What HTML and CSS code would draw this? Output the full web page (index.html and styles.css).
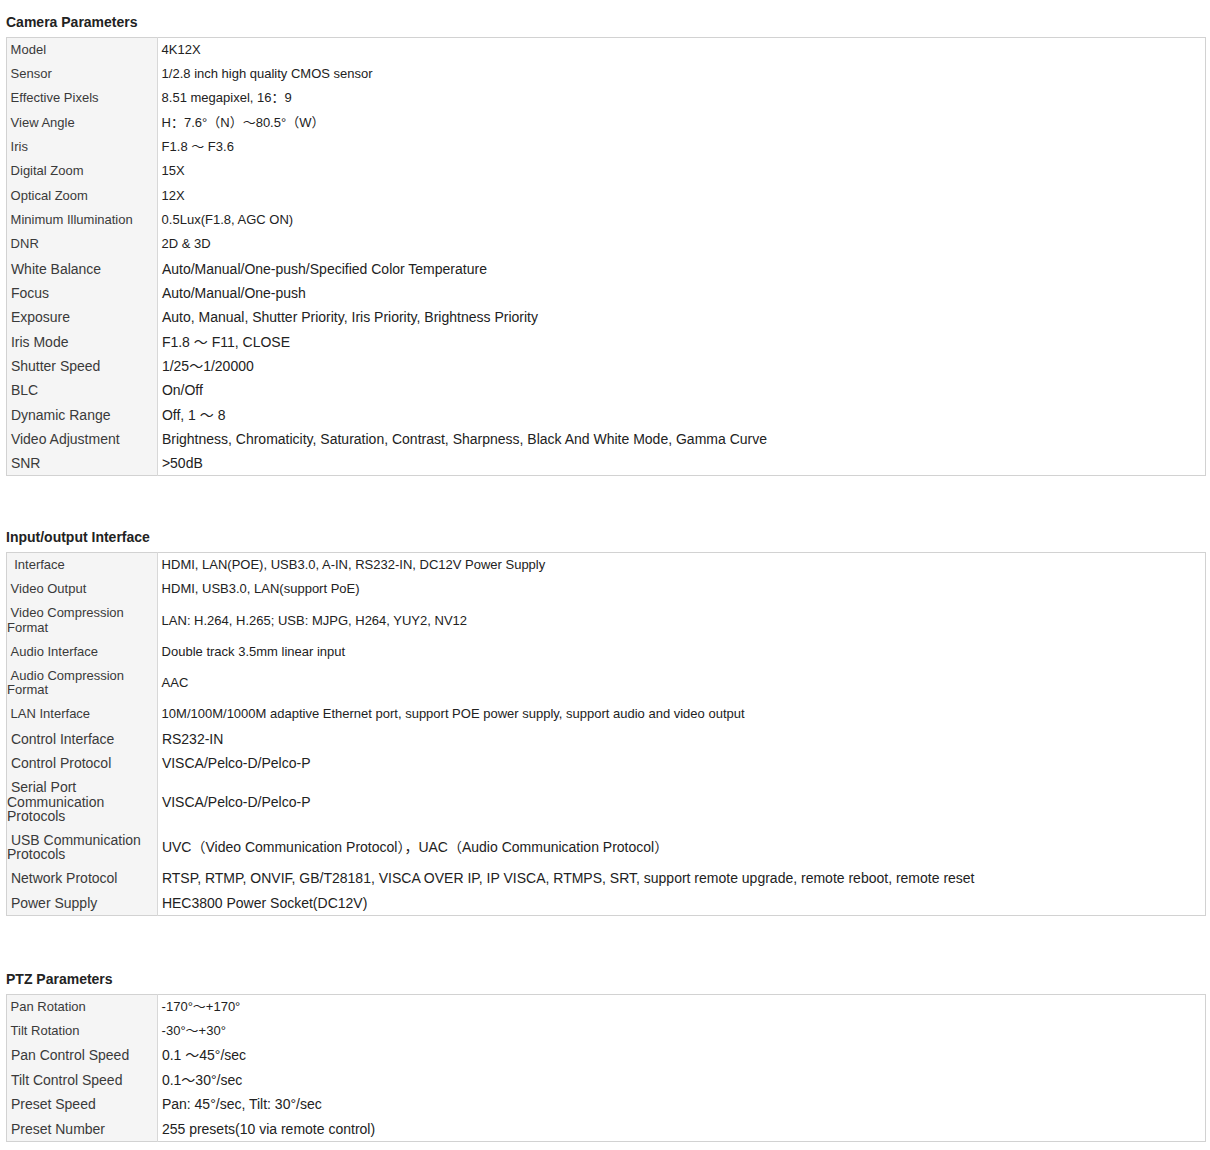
FILE: index.html
```html
<!DOCTYPE html>
<html>
<head>
<meta charset="utf-8">
<link rel="stylesheet" href="styles.css">
</head>
<body>
<div class="page">
  <section class="spec">
    <h3 class="spec-title">Camera Parameters</h3>
    <table class="spec-table">
      <tr class="sm"><td class="k">&nbsp;Model</td><td class="v">&nbsp;4K12X</td></tr>
      <tr class="sm"><td class="k">&nbsp;Sensor</td><td class="v">&nbsp;1/2.8 inch high quality CMOS sensor</td></tr>
      <tr class="sm"><td class="k">&nbsp;Effective Pixels</td><td class="v">&nbsp;8.51 megapixel, 16：9</td></tr>
      <tr class="sm"><td class="k">&nbsp;View Angle</td><td class="v">&nbsp;H：7.6°（N）～80.5°（W）</td></tr>
      <tr class="sm"><td class="k">&nbsp;Iris</td><td class="v">&nbsp;F1.8 ～ F3.6</td></tr>
      <tr class="sm"><td class="k">&nbsp;Digital Zoom</td><td class="v">&nbsp;15X</td></tr>
      <tr class="sm"><td class="k">&nbsp;Optical Zoom</td><td class="v">&nbsp;12X</td></tr>
      <tr class="sm"><td class="k">&nbsp;Minimum Illumination</td><td class="v">&nbsp;0.5Lux(F1.8, AGC ON)</td></tr>
      <tr class="sm"><td class="k">&nbsp;DNR</td><td class="v">&nbsp;2D &amp; 3D</td></tr>
      <tr class="lg"><td class="k">&nbsp;White Balance</td><td class="v">&nbsp;Auto/Manual/One-push/Specified Color Temperature</td></tr>
      <tr class="lg"><td class="k">&nbsp;Focus</td><td class="v">&nbsp;Auto/Manual/One-push</td></tr>
      <tr class="lg"><td class="k">&nbsp;Exposure</td><td class="v">&nbsp;Auto, Manual, Shutter Priority, Iris Priority, Brightness Priority</td></tr>
      <tr class="lg"><td class="k">&nbsp;Iris Mode</td><td class="v">&nbsp;F1.8 ～ F11, CLOSE</td></tr>
      <tr class="lg"><td class="k">&nbsp;Shutter Speed</td><td class="v">&nbsp;1/25～1/20000</td></tr>
      <tr class="lg"><td class="k">&nbsp;BLC</td><td class="v">&nbsp;On/Off</td></tr>
      <tr class="lg"><td class="k">&nbsp;Dynamic Range</td><td class="v">&nbsp;Off, 1 ～ 8</td></tr>
      <tr class="lg"><td class="k">&nbsp;Video Adjustment</td><td class="v">&nbsp;Brightness, Chromaticity, Saturation, Contrast, Sharpness, Black And White Mode, Gamma Curve</td></tr>
      <tr class="lg"><td class="k">&nbsp;SNR</td><td class="v">&nbsp;&gt;50dB</td></tr>
    </table>
  </section>

  <section class="spec spec--loose">
    <h3 class="spec-title">Input/output Interface</h3>
    <table class="spec-table spec-table--tall">
      <tr class="sm"><td class="k">&nbsp;&nbsp;Interface</td><td class="v">&nbsp;HDMI, LAN(POE), USB3.0, A-IN, RS232-IN, DC12V Power Supply</td></tr>
      <tr class="sm"><td class="k">&nbsp;Video Output</td><td class="v">&nbsp;HDMI, USB3.0, LAN(support PoE)</td></tr>
      <tr class="sm"><td class="k">&nbsp;Video Compression Format</td><td class="v">&nbsp;LAN: H.264, H.265; USB: MJPG, H264, YUY2, NV12</td></tr>
      <tr class="sm"><td class="k">&nbsp;Audio Interface</td><td class="v">&nbsp;Double track 3.5mm linear input</td></tr>
      <tr class="sm"><td class="k">&nbsp;Audio Compression Format</td><td class="v">&nbsp;AAC</td></tr>
      <tr class="sm"><td class="k">&nbsp;LAN Interface</td><td class="v">&nbsp;10M/100M/1000M adaptive Ethernet port, support POE power supply, support audio and video output</td></tr>
      <tr class="lg"><td class="k">&nbsp;Control Interface</td><td class="v">&nbsp;RS232-IN</td></tr>
      <tr class="lg"><td class="k">&nbsp;Control Protocol</td><td class="v">&nbsp;VISCA/Pelco-D/Pelco-P</td></tr>
      <tr class="lg"><td class="k">&nbsp;Serial Port Communication Protocols</td><td class="v">&nbsp;VISCA/Pelco-D/Pelco-P</td></tr>
      <tr class="lg"><td class="k">&nbsp;USB Communication Protocols</td><td class="v">&nbsp;UVC（Video Communication Protocol），UAC（Audio Communication Protocol）</td></tr>
      <tr class="lg"><td class="k">&nbsp;Network Protocol</td><td class="v">&nbsp;RTSP, RTMP, ONVIF, GB/T28181, VISCA OVER IP, IP VISCA, RTMPS, SRT, support remote upgrade, remote reboot, remote reset</td></tr>
      <tr class="lg"><td class="k">&nbsp;Power Supply</td><td class="v">&nbsp;HEC3800 Power Socket(DC12V)</td></tr>
    </table>
  </section>

  <section class="spec spec--last">
    <h3 class="spec-title">PTZ Parameters</h3>
    <table class="spec-table spec-table--tall">
      <tr class="sm"><td class="k">&nbsp;Pan Rotation</td><td class="v">&nbsp;-170°～+170°</td></tr>
      <tr class="sm"><td class="k">&nbsp;Tilt Rotation</td><td class="v">&nbsp;-30°～+30°</td></tr>
      <tr class="lg"><td class="k">&nbsp;Pan Control Speed</td><td class="v">&nbsp;0.1 ～45°/sec</td></tr>
      <tr class="lg"><td class="k">&nbsp;Tilt Control Speed</td><td class="v">&nbsp;0.1～30°/sec</td></tr>
      <tr class="lg"><td class="k">&nbsp;Preset Speed</td><td class="v">&nbsp;Pan: 45°/sec, Tilt: 30°/sec</td></tr>
      <tr class="lg"><td class="k">&nbsp;Preset Number</td><td class="v">&nbsp;255 presets(10 via remote control)</td></tr>
    </table>
  </section>
</div>
</body>
</html>
```

FILE: styles.css
```css
html, body {
  margin: 0;
  padding: 0;
  background: #ffffff;
}

body {
  font-family: "Liberation Sans", Arial, "Noto Sans CJK SC", sans-serif;
  color: #333333;
}

.page {
  padding: 14px 4px 0 6px;
  width: 1200px;
}

.spec {
  margin-bottom: 53px;
}

.spec--loose {
  margin-bottom: 55px;
}

.spec--last {
  margin-bottom: 0;
}

.spec-title {
  margin: 0 0 7px 0;
  font-size: 14px;
  line-height: 16px;
  font-weight: bold;
  color: #222222;
}

.spec-table {
  width: 1200px;
  border-collapse: collapse;
  border: 1px solid #d2d2d2;
}

.spec-table td {
  height: 24.36px;
  box-sizing: border-box;
  padding: 4.5px 0;
  line-height: 14.5px;
  vertical-align: middle;
}

.spec-table--tall td {
  height: 24.5px;
  padding: 4.5px 0;
}

.spec-table .k {
  width: 151px;
  background: #f5f5f5;
  border-right: 1px solid #d8d8d8;
  color: #3a3a3a;
}

.spec-table .v {
  color: #222222;
}

.sm td {
  font-size: 13px;
}

.lg td {
  font-size: 14px;
}
```
